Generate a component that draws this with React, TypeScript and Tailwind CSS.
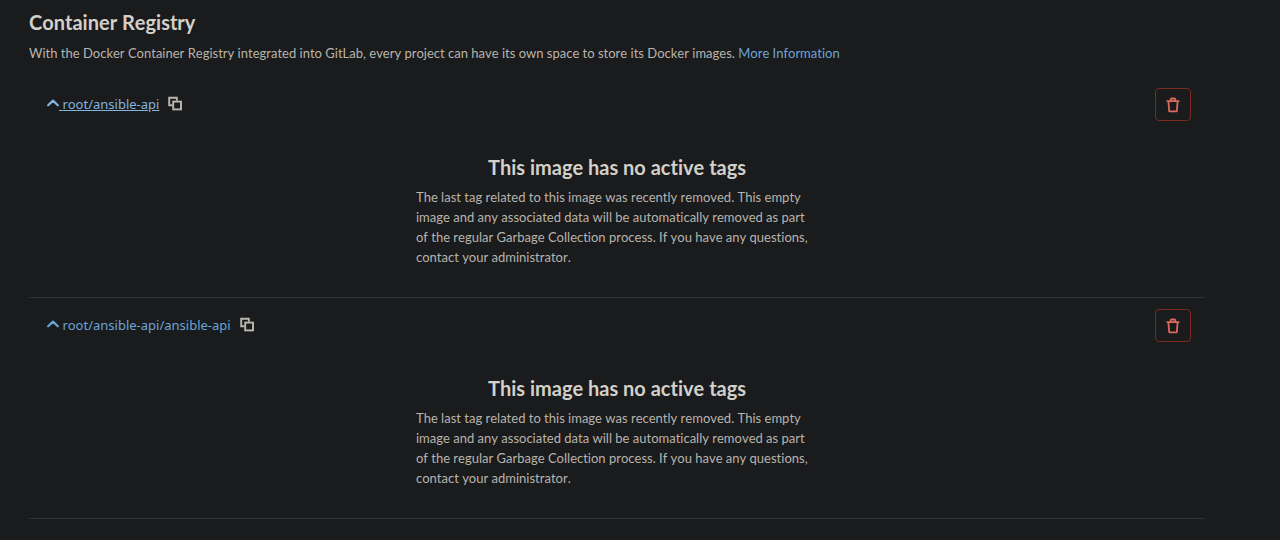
interface Repository {
  path: string;
  active?: boolean;
}

const repositories: Repository[] = [
  { path: "root/ansible-api", active: true },
  { path: "root/ansible-api/ansible-api" },
];

function ChevronUpIcon() {
  return (
    <svg className="inline-block h-3 w-3 align-baseline" viewBox="0 0 12 12" fill="none" stroke="currentColor" strokeWidth="2.2" aria-hidden="true">
      <path d="M1.2 8.2 6 3.6 10.8 8.2" strokeLinecap="round" strokeLinejoin="round" />
    </svg>
  );
}

function CopyIcon() {
  return (
    <svg className="h-4 w-4" viewBox="0 0 16 16" fill="none" stroke="currentColor" strokeWidth="1.9" aria-hidden="true">
      <path d="M5.5 9.2H2.2V1.7h7.6v3" />
      <rect x="6.2" y="5.6" width="7.8" height="7.8" />
    </svg>
  );
}

function TrashIcon() {
  return (
    <svg className="h-4 w-4" viewBox="0 0 16 16" fill="none" stroke="currentColor" strokeWidth="1.8" aria-hidden="true">
      <path d="M1.6 4.2h12.8M5.7 4V2.6q0-1.1 1.1-1.1h2.4q1.1 0 1.1 1.1V4M3.4 4.4l.8 9.9h7.6l.8-9.9" strokeLinejoin="round" />
    </svg>
  );
}

function RepositoryRow({ path, active }: Repository) {
  return (
    <li className="border-b border-[#303132] pt-[11px] pb-[30px]">
      <div className="flex items-center justify-between pr-[14px] pl-[18px]">
        <div className="flex items-center gap-2 pb-0.5">
          <a
            href="#"
            className={
              active
                ? "font-['Noto_Sans',sans-serif] text-[#83b4de] underline"
                : "font-['Noto_Sans',sans-serif] text-[#6aa5d8]"
            }
          >
            <ChevronUpIcon /> {path}
          </a>
          <button type="button" aria-label="Copy path" className="text-[#bcb8b1]">
            <CopyIcon />
          </button>
        </div>
        <button
          type="button"
          aria-label="Remove repository"
          className="flex h-[33px] w-9 items-center justify-center rounded border border-[#7b2a22] text-[#dc6a5c]"
        >
          <TrashIcon />
        </button>
      </div>

      <div className="mx-auto mt-8 w-full max-w-[402px]">
        <h2 className="text-center text-[20px] leading-7 font-bold text-[#d3d0ca]">
          This image has no active tags
        </h2>
        <p className="mt-[6px]">
          The last tag related to this image was recently removed. This empty image and any
          associated data will be automatically removed as part of the regular Garbage Collection
          process. If you have any questions, contact your administrator.
        </p>
      </div>
    </li>
  );
}

export default function App() {
  return (
    <div className="min-h-screen bg-[#1a1b1c] pt-2 pr-[75px] pl-[29px] font-[Lato,sans-serif] text-[13px] leading-5 text-[#b8b4ad] [font-kerning:none] [font-variant-ligatures:none]">
      {/* Header */}
      <header>
        <h1 className="text-[20px] leading-7 font-bold text-[#d3d0ca]">Container Registry</h1>
        <p className="mt-[7px]">
          With the Docker Container Registry integrated into GitLab, every project can have its own
          space to store its Docker images.{" "}
          <a href="#" className="text-[#6aa5d8]">
            More Information
          </a>
        </p>
      </header>

      {/* Repositories */}
      <ul className="mt-[14px]">
        {repositories.map((repository) => (
          <RepositoryRow key={repository.path} {...repository} />
        ))}
      </ul>
    </div>
  );
}
